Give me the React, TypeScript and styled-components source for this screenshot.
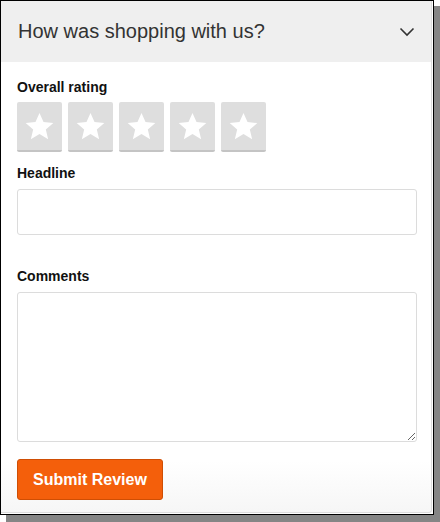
import React from "react";
import styled, { createGlobalStyle } from "styled-components";

const Global = createGlobalStyle`
  html, body { margin: 0; padding: 0; background: #fff; }
  body { font-family: "Liberation Sans", Arial, sans-serif; }
  * { box-sizing: border-box; }
`;

const Shell = styled.div`
  width: 440px;
  height: 522px;
  background: linear-gradient(#858585, #858585) 6px 6px / 434px 516px no-repeat;
`;

const Frame = styled.div`
  width: 434px;
  height: 515px;
  border: 1px solid #000;
  background: #fff;
  padding: 0 1px 1px 0;
`;

const Panel = styled.div`
  height: 100%;
  border-right: 1px solid #dcdcdc;
  border-bottom: 1px solid #dcdcdc;
  border-bottom-right-radius: 3px;
  background: linear-gradient(to bottom, #fff 0%, #fff 90%, #f6f6f6 100%);
  display: flex;
  flex-direction: column;
`;

const Header = styled.div`
  height: 61px;
  background: #efefef;
  display: flex;
  align-items: center;
  justify-content: space-between;
  padding: 0 16px 0 17px;
`;

const Title = styled.h2`
  margin: 0;
  font-size: 20px;
  font-weight: normal;
  color: #333;
`;

const Body = styled.div`
  padding: 17px 16px 0 16px;
  display: flex;
  flex-direction: column;
`;

const Label = styled.label<{ $gap?: number }>`
  display: block;
  font-size: 14px;
  line-height: 17px;
  font-weight: bold;
  color: #111;
  margin-top: ${(p) => p.$gap ?? 0}px;
  margin-bottom: 6px;
`;

const Stars = styled.div`
  display: flex;
  gap: 6px;
`;

const StarBox = styled.button`
  width: 45px;
  height: 50px;
  padding: 0;
  background: #dedede;
  border: none;
  border-bottom: 2px solid #c4c4c4;
  border-radius: 2px;
  display: flex;
  align-items: center;
  justify-content: center;
  cursor: pointer;
`;

const Input = styled.input`
  width: 400px;
  height: 46px;
  border: 1px solid #dcdcdc;
  border-radius: 3px;
  margin-top: 1px;
  font-family: inherit;
  font-size: 14px;
  padding: 0 10px;
`;

const TextArea = styled.textarea`
  width: 400px;
  height: 150px;
  border: 1px solid #dcdcdc;
  border-radius: 3px;
  margin-top: 1px;
  font-family: inherit;
  font-size: 14px;
  padding: 8px 10px;
  display: block;
`;

const Submit = styled.button`
  margin-top: 17px;
  width: 146px;
  height: 41px;
  background: #f45f0b;
  border: 1px solid #cf4e04;
  border-radius: 3px;
  color: #fff;
  font-family: inherit;
  font-size: 16px;
  font-weight: bold;
  cursor: pointer;
`;

const Star = () => (
  <svg width="31" height="31" viewBox="0 0 24 24">
    <path
      fill="#fff"
      d="M12 1.6l3.1 7 7.6.7-5.8 5 1.8 7.5L12 17.8l-6.7 4 1.8-7.5-5.8-5 7.6-.7z"
    />
  </svg>
);

const Chevron = () => (
  <svg width="16" height="10" viewBox="0 0 16 10">
    <path d="M1.5 1.5L8 8l6.5-6.5" fill="none" stroke="#333" strokeWidth="1.6" />
  </svg>
);

export default function App() {
  return (
    <>
      <Global />
      <Shell>
        <Frame>
          <Panel>
            <Header>
              <Title>How was shopping with us?</Title>
              <Chevron />
            </Header>
            <Body>
              <Label>Overall rating</Label>
              <Stars>
                {[1, 2, 3, 4, 5].map((n) => (
                  <StarBox key={n} aria-label={`${n} stars`}>
                    <Star />
                  </StarBox>
                ))}
              </Stars>
              <Label $gap={13}>Headline</Label>
              <Input />
              <Label $gap={33}>Comments</Label>
              <TextArea />
              <div>
                <Submit>Submit Review</Submit>
              </div>
            </Body>
          </Panel>
        </Frame>
      </Shell>
    </>
  );
}
